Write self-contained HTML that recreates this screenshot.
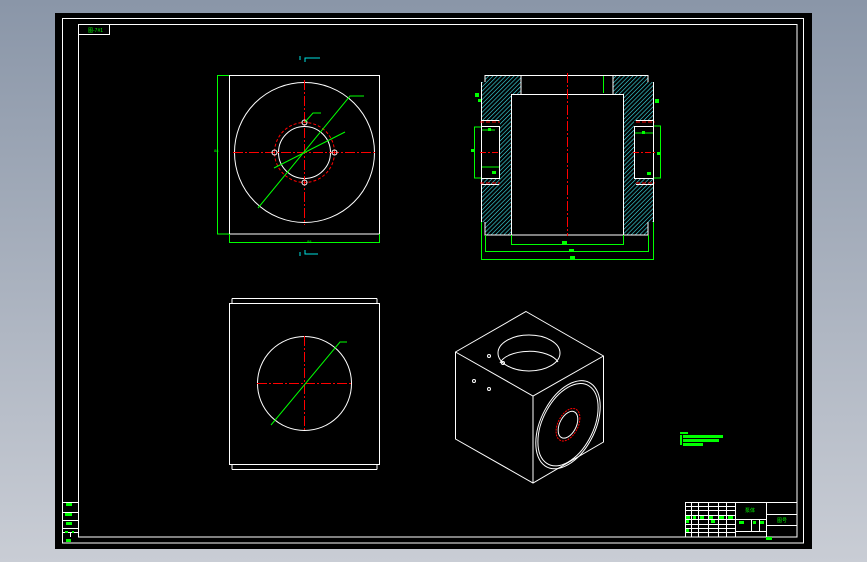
<!DOCTYPE html>
<html><head><meta charset="utf-8"><style>
html,body{margin:0;padding:0;width:867px;height:562px;overflow:hidden;background:linear-gradient(#8a96a8,#c9cdd5);}
svg{position:absolute;left:0;top:0;}
text{font-family:"Liberation Sans","Noto Sans CJK SC",sans-serif;fill:#00ff00;}
</style></head><body>
<svg width="867" height="562" viewBox="0 0 867 562" xmlns="http://www.w3.org/2000/svg">
<defs>
<pattern id="h" width="3" height="3" patternUnits="userSpaceOnUse" patternTransform="rotate(45)">
<rect width="3" height="3" fill="#000"/><line x1="0" y1="0" x2="0" y2="3" stroke="#40e8f0" stroke-width="1.2"/>
</pattern>
</defs>
<rect x="55" y="13" width="757" height="536" fill="#000"/>
<g fill="none" stroke="#fff" stroke-width="1">
<rect x="62.5" y="18.5" width="741" height="524.5"/>
<rect x="78.5" y="24.5" width="718.5" height="512.5"/>
<rect x="78.5" y="24.5" width="31" height="10"/>
</g>
<text x="88" y="32" font-size="5">图-7#1</text>

<!-- top-left view -->
<g fill="none" stroke-width="1">
<rect x="229.5" y="75.5" width="150" height="158.5" stroke="#fff"/>
<circle cx="304.5" cy="152.5" r="70" stroke="#fff"/>
<circle cx="304.5" cy="152.5" r="26" stroke="#fff"/>
<circle cx="304.5" cy="152.5" r="30" stroke="#f00" stroke-dasharray="3,2"/>
<line x1="233" y1="152.5" x2="377" y2="152.5" stroke="#f00" stroke-dasharray="10,2,2,2"/>
<line x1="304.5" y1="80" x2="304.5" y2="225" stroke="#f00" stroke-dasharray="10,2,2,2"/>
<circle cx="274.5" cy="152.5" r="2.5" stroke="#fff"/>
<circle cx="334.5" cy="152.5" r="2.5" stroke="#fff"/>
<circle cx="304.5" cy="122.5" r="2.5" stroke="#fff"/>
<circle cx="304.5" cy="182.5" r="2.5" stroke="#fff"/>
<g stroke="#00ff00">
<polyline points="229,75.5 217.5,75.5 217.5,234 229,234"/>
<polyline points="229.5,234 229.5,242.5 379.5,242.5 379.5,234"/>
<polyline points="258,208 350,96 364,96"/>
<polyline points="274,168 345,132"/>
<polyline points="305,122 313,113 321,113"/>
</g>
<g stroke="#00e0e0">
<line x1="300" y1="56" x2="300" y2="60"/><polyline points="305,62 305,58 320,58"/>
<line x1="300" y1="252" x2="300" y2="256"/><polyline points="305,250 305,254 318,254"/>
</g>
</g>
<text x="214" y="152" font-size="4">88</text>
<text x="307" y="243" font-size="4">88</text>

<!-- section view -->
<path d="M485,75 L521,75 L521,94 L512,94 L512,235 L485,235 L485,222 L481,222 L481,82 L485,82 Z" fill="url(#h)"/>
<path d="M613,75 L648,75 L648,82 L654,82 L654,222 L648,222 L648,235 L623,235 L623,94 L613,94 Z" fill="url(#h)"/>
<rect x="481" y="121" width="19" height="58" fill="#000"/>
<rect x="634" y="121" width="20" height="58" fill="#000"/>
<g fill="none" stroke="#fff" stroke-width="1">
<polyline points="485,222 485,235 648,235 648,222"/>
<polyline points="485,82 485,75.5 521,75.5 521,94.5 613,94.5 613,75.5 648,75.5 648,82"/>
<line x1="521" y1="75.5" x2="613" y2="75.5"/>
<rect x="511.5" y="94.5" width="112" height="140.5"/>
<line x1="481.5" y1="82" x2="481.5" y2="222"/><line x1="653.5" y1="82" x2="653.5" y2="222"/>
<polyline points="481,126.5 499.5,126.5 499.5,178.5 481,178.5"/>
<polyline points="654,126.5 634.5,126.5 634.5,178.5 654,178.5"/>
<line x1="481" y1="120.5" x2="499" y2="120.5"/><line x1="481" y1="184.5" x2="499" y2="184.5"/>
<line x1="636" y1="120.5" x2="654" y2="120.5"/><line x1="636" y1="184.5" x2="654" y2="184.5"/>
</g>
<g stroke="#f00" fill="none">
<line x1="567.5" y1="73" x2="567.5" y2="236" stroke-dasharray="10,2,2,2"/>
<line x1="480" y1="152.5" x2="500" y2="152.5" stroke-dasharray="6,2,2,2"/>
<line x1="633" y1="152.5" x2="655" y2="152.5" stroke-dasharray="6,2,2,2"/>
<line x1="480" y1="122" x2="500" y2="122" stroke-dasharray="4,2"/>
<line x1="480" y1="183" x2="500" y2="183" stroke-dasharray="4,2"/>
<line x1="636" y1="122" x2="655" y2="122" stroke-dasharray="4,2"/>
<line x1="636" y1="183" x2="655" y2="183" stroke-dasharray="4,2"/>
</g>
<g stroke="#00ff00" fill="none">
<polyline points="511.5,235 511.5,244.5 623.5,244.5 623.5,235"/>
<polyline points="485.5,235 485.5,251.5 648.5,251.5 648.5,235"/>
<polyline points="481.5,222 481.5,259.5 653.5,259.5 653.5,222"/>
<polyline points="481,127 474.5,127 474.5,178 481,178"/>
<polyline points="654,126 660.5,126 660.5,178 654,178"/>
<line x1="603.5" y1="76" x2="603.5" y2="93"/>
<line x1="482" y1="130" x2="495" y2="130"/><line x1="482" y1="167" x2="499" y2="167"/>
<line x1="635" y1="133" x2="653" y2="133"/>
</g>
<g fill="#00ff00">
<rect x="475" y="93" width="4" height="4"/><rect x="478" y="99" width="3" height="3"/>
<rect x="655" y="99" width="4" height="4"/><rect x="471" y="149" width="4" height="3"/>
<rect x="657" y="152" width="4" height="3"/><rect x="562" y="241" width="5" height="3"/>
<rect x="569" y="249" width="5" height="3"/><rect x="570" y="256" width="5" height="3"/>
<rect x="488" y="128" width="3" height="3"/><rect x="642" y="131" width="3" height="3"/>
<rect x="492" y="171" width="4" height="3"/><rect x="647" y="172" width="4" height="3"/>
</g>

<!-- bottom-left view -->
<g fill="none" stroke="#fff" stroke-width="1">
<line x1="232" y1="298.5" x2="377" y2="298.5"/>
<rect x="229.5" y="303.5" width="150" height="161"/>
<line x1="232" y1="469.5" x2="377" y2="469.5"/>
<line x1="232" y1="298.5" x2="232" y2="303"/><line x1="377" y1="298.5" x2="377" y2="303"/>
<line x1="232" y1="465" x2="232" y2="469.5"/><line x1="377" y1="465" x2="377" y2="469.5"/>
<circle cx="304.5" cy="383.5" r="47"/>
</g>
<g stroke="#f00" stroke-dasharray="10,2,2,2">
<line x1="257" y1="383.5" x2="352" y2="383.5"/><line x1="304.5" y1="336" x2="304.5" y2="431"/>
</g>
<polyline points="271,425 340,342 347,342" fill="none" stroke="#00ff00"/>

<!-- isometric -->
<g fill="none" stroke="#fff" stroke-width="1">
<polygon points="526,311.5 603.5,356 603.5,442 533,483 455.5,439 455.5,352"/>
<polyline points="455.5,352 533,396 603.5,356"/>
<line x1="533" y1="396" x2="533" y2="483"/>
<ellipse cx="529" cy="353" rx="31" ry="18"/>
<path d="M500,363 A30,15 0 0 1 558,362"/>
<circle cx="489" cy="356" r="1.5"/><circle cx="474" cy="381" r="1.5"/><circle cx="489" cy="389" r="1.5"/><circle cx="503" cy="363" r="1.5"/>
<g transform="matrix(70,-40,0,87,533,396)">
<circle cx="0.5" cy="0.56" r="0.46" vector-effect="non-scaling-stroke"/>
<circle cx="0.5" cy="0.56" r="0.43" vector-effect="non-scaling-stroke"/>
<circle cx="0.5" cy="0.56" r="0.14" vector-effect="non-scaling-stroke"/>
<circle cx="0.5" cy="0.56" r="0.17" stroke="#f00" stroke-dasharray="2,1" vector-effect="non-scaling-stroke"/>
</g>
</g>

<!-- notes -->
<g fill="#00ff00">
<rect x="680" y="432" width="8" height="2"/><rect x="683" y="435" width="40" height="3"/>
<rect x="683" y="439" width="36" height="3"/><rect x="683" y="443" width="20" height="3"/>
<rect x="680" y="435" width="2" height="10"/>
</g>

<!-- title block -->
<g fill="none" stroke="#fff" stroke-width="1">
<rect x="685.5" y="502.5" width="111.5" height="34.5"/>
<line x1="735.5" y1="502" x2="735.5" y2="537"/>
<line x1="766.5" y1="502" x2="766.5" y2="537"/>
<line x1="766.5" y1="514.5" x2="797" y2="514.5"/>
<line x1="766.5" y1="525.5" x2="797" y2="525.5"/>
<line x1="735.5" y1="519.5" x2="766.5" y2="519.5"/>
<line x1="735.5" y1="531.5" x2="766.5" y2="531.5"/>
<line x1="751.5" y1="519.5" x2="751.5" y2="531.5"/><line x1="759.5" y1="519.5" x2="759.5" y2="531.5"/>
<line x1="685" y1="506.5" x2="735" y2="506.5"/><line x1="685" y1="510.5" x2="735" y2="510.5"/>
<line x1="685" y1="515.5" x2="735" y2="515.5"/><line x1="685" y1="519.5" x2="735" y2="519.5"/>
<line x1="685" y1="524.5" x2="735" y2="524.5"/><line x1="685" y1="528.5" x2="735" y2="528.5"/>
<line x1="685" y1="532.5" x2="735" y2="532.5"/>
<line x1="691.5" y1="502" x2="691.5" y2="537"/><line x1="698.5" y1="502" x2="698.5" y2="537"/>
<line x1="708.5" y1="502" x2="708.5" y2="537"/><line x1="718.5" y1="502" x2="718.5" y2="537"/>
<line x1="726.5" y1="502" x2="726.5" y2="537"/>
</g>
<text x="745" y="512" font-size="5">泵体</text>
<text x="777" y="522" font-size="5">图号</text>
<g fill="#00ff00">
<rect x="686" y="516" width="4" height="3"/><rect x="693" y="516" width="3" height="3"/><rect x="700" y="516" width="4" height="3"/>
<rect x="709" y="516" width="4" height="3"/><rect x="719" y="516" width="5" height="3"/><rect x="728" y="516" width="5" height="3"/>
<rect x="686" y="520" width="3" height="3"/><rect x="711" y="520" width="4" height="3"/><rect x="686" y="529" width="3" height="3"/>
<rect x="739" y="521" width="5" height="3"/><rect x="753" y="521" width="3" height="3"/><rect x="760" y="521" width="4" height="3"/>
<rect x="766" y="537" width="6" height="3"/>
</g>

<!-- bottom-left small table -->
<g fill="none" stroke="#fff">
<line x1="62.5" y1="502.5" x2="78.5" y2="502.5"/><line x1="62.5" y1="512.5" x2="78.5" y2="512.5"/>
<line x1="62.5" y1="520.5" x2="78.5" y2="520.5"/><line x1="62.5" y1="528.5" x2="78.5" y2="528.5"/>
<line x1="62.5" y1="532.5" x2="78.5" y2="532.5"/><line x1="70.5" y1="532" x2="70.5" y2="537"/>
</g>
<g fill="#00ff00">
<rect x="66" y="503" width="6" height="3"/><rect x="65" y="513" width="7" height="3"/>
<rect x="66" y="522" width="6" height="3"/><rect x="65" y="531" width="3" height="2"/><rect x="72" y="531" width="2" height="2"/>
<rect x="66" y="539" width="5" height="3"/>
</g>
</svg>
</body></html>
